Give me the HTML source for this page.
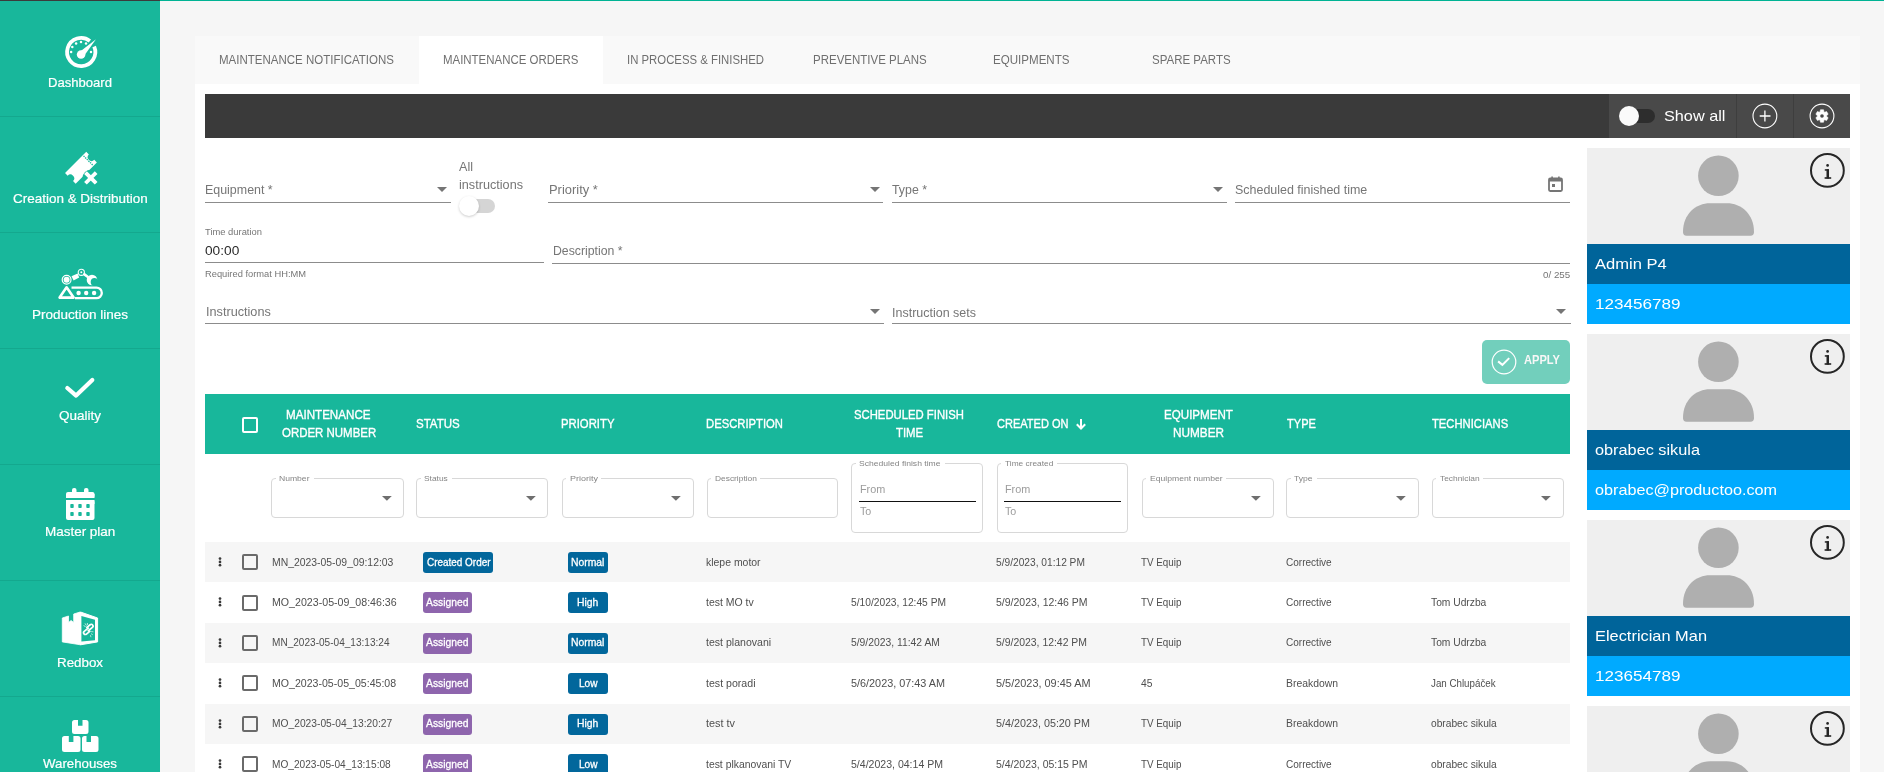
<!DOCTYPE html>
<html><head><meta charset="utf-8"><title>Maintenance Orders</title>
<style>
html,body{margin:0;padding:0;}
body{width:1884px;height:772px;position:relative;overflow:hidden;background:#f6f6f6;font-family:"Liberation Sans",sans-serif;}
.t{position:absolute;white-space:nowrap;transform-origin:0 0;}
.r{position:absolute;}
.s{position:absolute;overflow:visible;}
</style></head><body>
<div class="r" style="left:0px;top:0px;width:160px;height:1px;background:#3b3b3b;"></div>
<div class="r" style="left:160px;top:0px;width:1724px;height:1px;background:#00b394;"></div>
<div class="r" style="left:0px;top:1px;width:160px;height:771px;background:#18b79b;"></div>
<div class="r" style="left:0px;top:116px;width:160px;height:1px;background:#14a88e;"></div>
<div class="r" style="left:0px;top:232px;width:160px;height:1px;background:#14a88e;"></div>
<div class="r" style="left:0px;top:348px;width:160px;height:1px;background:#14a88e;"></div>
<div class="r" style="left:0px;top:464px;width:160px;height:1px;background:#14a88e;"></div>
<div class="r" style="left:0px;top:580px;width:160px;height:1px;background:#14a88e;"></div>
<div class="r" style="left:0px;top:696px;width:160px;height:1px;background:#14a88e;"></div>
<div class="t" style="left:48.00px;top:76.00px;font-size:13px;line-height:13px;color:#ffffff;transform:scaleX(1.0063);-webkit-text-stroke:0.2px #fff;">Dashboard</div>
<div class="t" style="left:12.65px;top:192.00px;font-size:13px;line-height:13px;color:#ffffff;transform:scaleX(1.0357);-webkit-text-stroke:0.2px #fff;">Creation &amp; Distribution</div>
<div class="t" style="left:32.00px;top:308.00px;font-size:13px;line-height:13px;color:#ffffff;transform:scaleX(1.0378);-webkit-text-stroke:0.2px #fff;">Production lines</div>
<div class="t" style="left:59.00px;top:409.00px;font-size:13px;line-height:13px;color:#ffffff;transform:scaleX(1.0381);-webkit-text-stroke:0.2px #fff;">Quality</div>
<div class="t" style="left:44.85px;top:525.00px;font-size:13px;line-height:13px;color:#ffffff;transform:scaleX(1.0350);-webkit-text-stroke:0.2px #fff;">Master plan</div>
<div class="t" style="left:57.00px;top:656.00px;font-size:13px;line-height:13px;color:#ffffff;transform:scaleX(1.0266);-webkit-text-stroke:0.2px #fff;">Redbox</div>
<div class="t" style="left:43.00px;top:757.00px;font-size:13px;line-height:13px;color:#ffffff;transform:scaleX(1.0207);-webkit-text-stroke:0.2px #fff;">Warehouses</div>
<svg class="s" style="left:65px;top:36px;" width="32" height="32" viewBox="0 0 32 32"><path d="M29.18 10.49 A14.1 14.1 0 1 1 24.88 4.89" fill="none" stroke="#fff" stroke-width="3.8"/>
<circle cx="16.1" cy="18.5" r="4.3" fill="#fff"/>
<path d="M31 3.2 L18.6 20.6 L13.9 16.4 Z" fill="#fff"/>
<circle cx="6.1" cy="16" r="1.25" fill="#fff"/><circle cx="7.3" cy="11" r="1.25" fill="#fff"/>
<circle cx="11.1" cy="7.4" r="1.25" fill="#fff"/><circle cx="16" cy="6" r="1.25" fill="#fff"/>
<circle cx="21" cy="7.4" r="1.25" fill="#fff"/><circle cx="26" cy="16" r="1.25" fill="#fff"/></svg>
<svg class="s" style="left:60px;top:146px;" width="44" height="44" viewBox="0 0 44 44"><g transform="translate(20.95 21.75) rotate(-45)">
<path d="M-15 -7.5 H15 V-3.8 A3.8 3.8 0 0 0 15 3.8 V7.5 H-15 V3.8 A3.8 3.8 0 0 0 -15 -3.8 Z" fill="#fff"/>
<g fill="#18b79b"><rect x="9.6" y="-6.6" width="1.3" height="1.4"/><rect x="9.6" y="-4.3" width="1.3" height="1.4"/><rect x="9.6" y="-2" width="1.3" height="1.4"/><rect x="9.6" y="0.3" width="1.3" height="1.4"/><rect x="9.6" y="2.6" width="1.3" height="1.4"/><rect x="9.6" y="4.9" width="1.3" height="1.4"/></g>
</g>
<circle cx="30.8" cy="31.9" r="8.2" fill="#18b79b"/>
<path d="M26.8 27.9 L34.8 35.9 M34.8 27.9 L26.8 35.9" stroke="#fff" stroke-width="3.8" stroke-linecap="square" stroke-linejoin="round"/></svg>
<svg class="s" style="left:56px;top:262px;" width="48" height="42" viewBox="0 0 48 42"><g fill="none" stroke="#fff">
<path d="M10.6 25.3 L3.6 35.6 L17.6 35.6 Z" stroke-width="2.6" stroke-linejoin="round"/>
<path d="M15.5 25.6 H40.5 A5.3 5.3 0 0 1 40.5 36.2 H19" stroke-width="2.3"/>
<circle cx="10.6" cy="17.7" r="4.4" stroke-width="1.2"/>
<circle cx="25.3" cy="10.3" r="3.1" stroke-width="1.1"/>
</g>
<mask id="clawm"><rect x="0" y="0" width="48" height="42" fill="#fff"/><circle cx="38.6" cy="20" r="3.9" fill="#000"/></mask>
<circle cx="36" cy="18" r="5.3" fill="#fff" mask="url(#clawm)"/>
<circle cx="10.6" cy="17.7" r="3" fill="#fff"/>
<circle cx="25.3" cy="10.3" r="1" fill="#fff"/>
<path d="M15.5 14.2 L21.6 11.6 L23.2 15.4 L17.6 18.4 Z" fill="#fff"/>
<path d="M28.4 12.4 L31.6 14.8" stroke="#fff" stroke-width="2.6" stroke-linecap="round"/>
<circle cx="22.6" cy="31" r="2.2" fill="#fff"/><circle cx="30.2" cy="31" r="2.2" fill="#fff"/><circle cx="38.1" cy="31" r="2.2" fill="#fff"/></svg>
<svg class="s" style="left:62px;top:374px;" width="36" height="28" viewBox="0 0 36 28"><path d="M5.3 14 L14.1 21.6 L30.3 6" fill="none" stroke="#fff" stroke-width="4.2" stroke-linecap="round" stroke-linejoin="round"/></svg>
<svg class="s" style="left:58px;top:480px;" width="44" height="44" viewBox="0 0 44 44"><rect x="8" y="12" width="28.5" height="6" rx="2" fill="#fff"/>
<rect x="8" y="14" width="28.5" height="4" fill="#fff"/>
<rect x="8" y="20" width="28.5" height="20" rx="2" fill="#fff"/>
<rect x="8" y="20" width="28.5" height="4" fill="#fff"/>
<rect x="14" y="8" width="4.5" height="6" rx="2" fill="#fff"/><rect x="26" y="8" width="4.5" height="6" rx="2" fill="#fff"/>
<g fill="#18b79b"><rect x="12.3" y="24" width="3.4" height="4" rx="0.8"/><rect x="20.3" y="24" width="3.4" height="4" rx="0.8"/><rect x="28.3" y="24" width="3.4" height="4" rx="0.8"/>
<rect x="12.3" y="32" width="3.4" height="4" rx="0.8"/><rect x="20.3" y="32" width="3.4" height="4" rx="0.8"/><rect x="28.3" y="32" width="3.4" height="4" rx="0.8"/></g></svg>
<svg class="s" style="left:58px;top:606px;" width="44" height="44" viewBox="0 0 44 44"><path d="M4.3 12 L10.5 10 V16.5 L13.1 14.5 L15.7 16.5 V8 L22.2 6 L22.5 38.8 L4.3 35.9 Z" fill="#fff" stroke="#fff" stroke-width="0.8" stroke-linejoin="round"/>
<path d="M22.5 6 L39.6 12 V35.9 L22.5 38.8 Z" fill="#fff" stroke="#fff" stroke-width="1" stroke-linejoin="round"/>
<path d="M23.4 10 L37 13.7 V34.2 L23.4 35.6 Z" fill="#18b79b"/>
<g transform="translate(30.3 23.4) rotate(-40)" fill="none" stroke="#fff" stroke-width="1.7"><path d="M1.6 -1.1 H-4.4 A1.75 1.75 0 0 0 -4.4 2.4 H0.6"/><path d="M-1.6 1.1 H4.4 A1.75 1.75 0 0 0 4.4 -2.4 H-0.6"/></g>
<path d="M25.6 19.6 L27.6 20.6 M27 17.4 L28.4 19.6 M29.4 17 L29.4 19" stroke="#fff" stroke-width="0.9" opacity="0.8"/>
<path d="M33.2 25.6 L35.4 25.8 M33 27.6 L34.8 28.8 M32.4 29.2 L33 31.2" stroke="#fff" stroke-width="0.9" opacity="0.7"/></svg>
<svg class="s" style="left:58px;top:714px;" width="44" height="44" viewBox="0 0 44 44"><path d="M16.5 6 H20 V11.7 H24.5 V6 H28 A2.5 2.5 0 0 1 30.5 8.5 V17.5 A2.5 2.5 0 0 1 28 20 H16.5 A2.5 2.5 0 0 1 14 17.5 V8.5 A2.5 2.5 0 0 1 16.5 6 Z" fill="#fff"/>
<path d="M6.5 22 H10.8 V28 H15.4 V22 H20 A2.5 2.5 0 0 1 22.5 24.5 V35.4 A2.5 2.5 0 0 1 20 37.9 H6.5 A2.5 2.5 0 0 1 4 35.4 V24.5 A2.5 2.5 0 0 1 6.5 22 Z" fill="#fff"/>
<path d="M26.5 22 H28.5 V28 H33 V22 H38 A2.5 2.5 0 0 1 40.5 24.5 V35.4 A2.5 2.5 0 0 1 38 37.9 H26.5 A2.5 2.5 0 0 1 24 35.4 V24.5 A2.5 2.5 0 0 1 26.5 22 Z" fill="#fff"/></svg>
<div class="r" style="left:195px;top:36px;width:1665px;height:48px;background:#f9f9f9;"></div>
<div class="r" style="left:419px;top:36px;width:184px;height:48px;background:#ffffff;"></div>
<div class="r" style="left:195px;top:84px;width:1665px;height:688px;background:#ffffff;"></div>
<div class="t" style="left:219.40px;top:53.59px;font-size:12.3px;line-height:12.3px;color:#6f6f6f;transform:scaleX(0.9358);">MAINTENANCE NOTIFICATIONS</div>
<div class="t" style="left:443.00px;top:53.59px;font-size:12.3px;line-height:12.3px;color:#6f6f6f;transform:scaleX(0.9308);">MAINTENANCE ORDERS</div>
<div class="t" style="left:627.20px;top:53.59px;font-size:12.3px;line-height:12.3px;color:#6f6f6f;transform:scaleX(0.9237);">IN PROCESS &amp; FINISHED</div>
<div class="t" style="left:812.90px;top:53.59px;font-size:12.3px;line-height:12.3px;color:#6f6f6f;transform:scaleX(0.9344);">PREVENTIVE PLANS</div>
<div class="t" style="left:992.70px;top:53.59px;font-size:12.3px;line-height:12.3px;color:#6f6f6f;transform:scaleX(0.9406);">EQUIPMENTS</div>
<div class="t" style="left:1151.60px;top:53.59px;font-size:12.3px;line-height:12.3px;color:#6f6f6f;transform:scaleX(0.9360);">SPARE PARTS</div>
<div class="r" style="left:205px;top:94px;width:1645px;height:44px;background:#3a3a3a;"></div>
<div class="r" style="left:1609px;top:94px;width:241px;height:44px;background:#494949;"></div>
<div class="r" style="left:1736px;top:94px;width:1px;height:44px;background:#3e3e3e;"></div>
<div class="r" style="left:1793px;top:94px;width:1px;height:44px;background:#3e3e3e;"></div>
<div class="r" style="left:1624px;top:109px;width:31px;height:14px;background:#2d2d2d;border-radius:7px;"></div>
<div class="r" style="left:1618.8px;top:106px;width:20px;height:20px;background:#fafafa;border-radius:50%;"></div>
<div class="t" style="left:1663.80px;top:108.10px;font-size:15px;line-height:15px;color:#ffffff;transform:scaleX(1.0829);">Show all</div>
<svg class="s" style="left:1752px;top:103px;" width="26" height="26" viewBox="0 0 26 26"><circle cx="12.9" cy="13" r="11.9" fill="none" stroke="#fff" stroke-width="1.1"/><path d="M7.7 13 H18.5 M12.9 7.6 V18.4" stroke="#fff" stroke-width="1.3"/></svg>
<svg class="s" style="left:1809px;top:103px;" width="26" height="26" viewBox="0 0 26 26"><circle cx="13" cy="13" r="11.9" fill="none" stroke="#fff" stroke-width="1.1"/>
<g transform="translate(13 13)"><path d="M-1.91 -4.29 L-1.55 -6.21 L1.55 -6.21 L1.91 -4.29 L2.76 -3.80 L4.60 -4.45 L6.15 -1.76 L4.67 -0.49 L4.67 0.49 L6.15 1.76 L4.60 4.45 L2.76 3.80 L1.91 4.29 L1.55 6.21 L-1.55 6.21 L-1.91 4.29 L-2.76 3.80 L-4.60 4.45 L-6.15 1.76 L-4.67 0.49 L-4.67 -0.49 L-6.15 -1.76 L-4.60 -4.45 L-2.76 -3.80 Z" fill="#fff" stroke="#fff" stroke-width="0.6" stroke-linejoin="round"/><circle r="1.8" fill="#494949"/></g></svg>
<div class="t" style="left:205.30px;top:183.30px;font-size:13px;line-height:13px;color:#767676;transform:scaleX(0.9559);">Equipment *</div>
<div class="t" style="left:459.00px;top:161.22px;font-size:12.5px;line-height:12.5px;color:#767676;transform:scaleX(1.0077);">All</div>
<div class="t" style="left:459.00px;top:178.62px;font-size:12.5px;line-height:12.5px;color:#767676;transform:scaleX(1.0123);">instructions</div>
<div class="t" style="left:548.50px;top:183.30px;font-size:13px;line-height:13px;color:#767676;transform:scaleX(0.9935);">Priority *</div>
<div class="t" style="left:892.40px;top:183.30px;font-size:13px;line-height:13px;color:#767676;transform:scaleX(0.9497);">Type *</div>
<div class="t" style="left:1235.00px;top:183.30px;font-size:13px;line-height:13px;color:#767676;transform:scaleX(0.9585);">Scheduled finished time</div>
<div class="r" style="left:205px;top:202px;width:246px;height:1px;background:#8c8c8c;"></div>
<div class="r" style="left:548px;top:202px;width:335px;height:1px;background:#8c8c8c;"></div>
<div class="r" style="left:892px;top:202px;width:335px;height:1px;background:#8c8c8c;"></div>
<div class="r" style="left:1235px;top:202px;width:335px;height:1px;background:#8c8c8c;"></div>
<div class="r" style="left:205px;top:262px;width:339px;height:1px;background:#8c8c8c;"></div>
<div class="r" style="left:552px;top:263px;width:1018px;height:1px;background:#8c8c8c;"></div>
<div class="r" style="left:205px;top:323px;width:679px;height:1px;background:#8c8c8c;"></div>
<div class="r" style="left:892px;top:323px;width:679px;height:1px;background:#8c8c8c;"></div>
<svg class="s" style="left:437px;top:187px;" width="10" height="5" viewBox="0 0 10 5"><path d="M0 0 H10 L5.0 5 Z" fill="#757575"/></svg>
<svg class="s" style="left:870px;top:187px;" width="10" height="5" viewBox="0 0 10 5"><path d="M0 0 H10 L5.0 5 Z" fill="#757575"/></svg>
<svg class="s" style="left:1213.4px;top:187px;" width="10" height="5" viewBox="0 0 10 5"><path d="M0 0 H10 L5.0 5 Z" fill="#757575"/></svg>
<svg class="s" style="left:870px;top:309px;" width="10" height="5" viewBox="0 0 10 5"><path d="M0 0 H10 L5.0 5 Z" fill="#757575"/></svg>
<svg class="s" style="left:1556px;top:309px;" width="10" height="5" viewBox="0 0 10 5"><path d="M0 0 H10 L5.0 5 Z" fill="#757575"/></svg>
<svg class="s" style="left:1548px;top:176px;" width="15" height="16" viewBox="0 0 15 16"><rect x="1" y="2.5" width="13" height="12.5" rx="1.2" fill="none" stroke="#757575" stroke-width="1.8"/><rect x="1" y="2.5" width="13" height="3" fill="#757575"/><rect x="3.3" y="0.5" width="1.6" height="3" fill="#757575"/><rect x="10.1" y="0.5" width="1.6" height="3" fill="#757575"/><rect x="4" y="8" width="3" height="3" fill="#757575"/></svg>
<div class="r" style="left:460px;top:199px;width:35px;height:14px;background:#d5d5d5;border-radius:7px;"></div>
<div class="r" style="left:458.5px;top:196px;width:20px;height:20px;background:#ffffff;border-radius:50%;box-shadow:0 1px 2.5px rgba(0,0,0,0.2);"></div>
<div class="t" style="left:205.00px;top:228.18px;font-size:9px;line-height:9px;color:#767676;transform:scaleX(1.0422);">Time duration</div>
<div class="t" style="left:205.00px;top:244.30px;font-size:13px;line-height:13px;color:#2a2a2a;transform:scaleX(1.0543);">00:00</div>
<div class="t" style="left:205.00px;top:269.16px;font-size:9.5px;line-height:9.5px;color:#767676;transform:scaleX(0.9811);">Required format HH:MM</div>
<div class="t" style="left:552.70px;top:244.00px;font-size:13px;line-height:13px;color:#767676;transform:scaleX(0.9444);">Description *</div>
<div class="t" style="left:1542.80px;top:269.86px;font-size:9.5px;line-height:9.5px;color:#767676;transform:scaleX(1.0298);">0/ 255</div>
<div class="t" style="left:205.50px;top:305.00px;font-size:13px;line-height:13px;color:#767676;transform:scaleX(0.9748);">Instructions</div>
<div class="t" style="left:892.20px;top:305.50px;font-size:13px;line-height:13px;color:#767676;transform:scaleX(0.9608);">Instruction sets</div>
<div class="r" style="left:1482px;top:340px;width:88px;height:44px;background:#72cfbc;border-radius:5px;"></div>
<svg class="s" style="left:1491px;top:349px;" width="26" height="26" viewBox="0 0 26 26"><circle cx="13" cy="13" r="11.8" fill="none" stroke="#fff" stroke-width="1.2"/><path d="M7.1 12.4 L11.4 15.9 L18.2 9.1" fill="none" stroke="#fff" stroke-width="2"/></svg>
<div class="t" style="left:1524.10px;top:354.32px;font-size:12.5px;line-height:12.5px;color:#f7f7f7;font-weight:bold;transform:scaleX(0.8882);">APPLY</div>
<div class="r" style="left:205px;top:394px;width:1365px;height:60px;background:#18b79b;"></div>
<div class="r" style="left:242px;top:417px;width:16px;height:16px;background:transparent;border:2px solid #fff;border-radius:2px;box-sizing:border-box;"></div>
<div class="t" style="left:286.40px;top:408.60px;font-size:12.4px;line-height:12.4px;color:#ffffff;transform:scaleX(0.9373);-webkit-text-stroke:0.35px #fff;">MAINTENANCE</div>
<div class="t" style="left:281.50px;top:426.50px;font-size:12.4px;line-height:12.4px;color:#ffffff;transform:scaleX(0.9248);-webkit-text-stroke:0.35px #fff;">ORDER NUMBER</div>
<div class="t" style="left:416.30px;top:417.50px;font-size:12.4px;line-height:12.4px;color:#ffffff;transform:scaleX(0.9304);-webkit-text-stroke:0.35px #fff;">STATUS</div>
<div class="t" style="left:561.40px;top:417.50px;font-size:12.4px;line-height:12.4px;color:#ffffff;transform:scaleX(0.9136);-webkit-text-stroke:0.35px #fff;">PRIORITY</div>
<div class="t" style="left:706.20px;top:417.50px;font-size:12.4px;line-height:12.4px;color:#ffffff;transform:scaleX(0.9086);-webkit-text-stroke:0.35px #fff;">DESCRIPTION</div>
<div class="t" style="left:853.80px;top:408.50px;font-size:12.4px;line-height:12.4px;color:#ffffff;transform:scaleX(0.9123);-webkit-text-stroke:0.35px #fff;">SCHEDULED FINISH</div>
<div class="t" style="left:895.60px;top:426.50px;font-size:12.4px;line-height:12.4px;color:#ffffff;transform:scaleX(0.9183);-webkit-text-stroke:0.35px #fff;">TIME</div>
<div class="t" style="left:996.70px;top:417.50px;font-size:12.4px;line-height:12.4px;color:#ffffff;transform:scaleX(0.8895);-webkit-text-stroke:0.35px #fff;">CREATED ON</div>
<svg class="s" style="left:1075px;top:418px;" width="12" height="12" viewBox="0 0 12 12"><path d="M6 1 V10.5 M1.8 6.3 L6 10.5 L10.2 6.3" fill="none" stroke="#fff" stroke-width="2"/></svg>
<div class="t" style="left:1164.40px;top:408.50px;font-size:12.4px;line-height:12.4px;color:#ffffff;transform:scaleX(0.9360);-webkit-text-stroke:0.35px #fff;">EQUIPMENT</div>
<div class="t" style="left:1173.30px;top:426.50px;font-size:12.4px;line-height:12.4px;color:#ffffff;transform:scaleX(0.9491);-webkit-text-stroke:0.35px #fff;">NUMBER</div>
<div class="t" style="left:1286.60px;top:417.50px;font-size:12.4px;line-height:12.4px;color:#ffffff;transform:scaleX(0.8923);-webkit-text-stroke:0.35px #fff;">TYPE</div>
<div class="t" style="left:1432.20px;top:417.50px;font-size:12.4px;line-height:12.4px;color:#ffffff;transform:scaleX(0.9066);-webkit-text-stroke:0.35px #fff;">TECHNICIANS</div>
<div class="r" style="left:271px;top:478.4px;width:133px;height:39.60000000000002px;background:transparent;border:1.3px solid #d8d8d8;border-radius:4px;box-sizing:border-box;"></div>
<div class="r" style="left:275.5px;top:476.4px;width:38.0px;height:4px;background:#ffffff;"></div>
<div class="t" style="left:279.00px;top:474.83px;font-size:8px;line-height:8px;color:#858585;transform:scaleX(1.0719);">Number</div>
<svg class="s" style="left:381.8px;top:495.59999999999997px;" width="9.8" height="4.8" viewBox="0 0 9.8 4.8"><path d="M0 0 H9.8 L4.9 4.8 Z" fill="#6f6f6f"/></svg>
<div class="r" style="left:416.3px;top:478.4px;width:132.2px;height:39.60000000000002px;background:transparent;border:1.3px solid #d8d8d8;border-radius:4px;box-sizing:border-box;"></div>
<div class="r" style="left:420.8px;top:476.4px;width:31.3px;height:4px;background:#ffffff;"></div>
<div class="t" style="left:424.30px;top:474.83px;font-size:8px;line-height:8px;color:#858585;transform:scaleX(1.0494);">Status</div>
<svg class="s" style="left:526.3px;top:495.59999999999997px;" width="9.8" height="4.8" viewBox="0 0 9.8 4.8"><path d="M0 0 H9.8 L4.9 4.8 Z" fill="#6f6f6f"/></svg>
<div class="r" style="left:561.5px;top:478.4px;width:132.10000000000002px;height:39.60000000000002px;background:transparent;border:1.3px solid #d8d8d8;border-radius:4px;box-sizing:border-box;"></div>
<div class="r" style="left:566.0px;top:476.4px;width:35.4px;height:4px;background:#ffffff;"></div>
<div class="t" style="left:569.50px;top:474.83px;font-size:8px;line-height:8px;color:#858585;transform:scaleX(1.1208);">Priority</div>
<svg class="s" style="left:671.4px;top:495.59999999999997px;" width="9.8" height="4.8" viewBox="0 0 9.8 4.8"><path d="M0 0 H9.8 L4.9 4.8 Z" fill="#6f6f6f"/></svg>
<div class="r" style="left:706.5px;top:478.4px;width:131.5px;height:39.60000000000002px;background:transparent;border:1.3px solid #d8d8d8;border-radius:4px;box-sizing:border-box;"></div>
<div class="r" style="left:711.0px;top:476.4px;width:49.4px;height:4px;background:#ffffff;"></div>
<div class="t" style="left:714.50px;top:474.83px;font-size:8px;line-height:8px;color:#858585;transform:scaleX(1.0471);">Description</div>
<div class="r" style="left:1141.5px;top:478.4px;width:132.0999999999999px;height:39.60000000000002px;background:transparent;border:1.3px solid #d8d8d8;border-radius:4px;box-sizing:border-box;"></div>
<div class="r" style="left:1146.0px;top:476.4px;width:80.1px;height:4px;background:#ffffff;"></div>
<div class="t" style="left:1149.50px;top:474.83px;font-size:8px;line-height:8px;color:#858585;transform:scaleX(1.0740);">Equipment number</div>
<svg class="s" style="left:1251.3999999999999px;top:495.59999999999997px;" width="9.8" height="4.8" viewBox="0 0 9.8 4.8"><path d="M0 0 H9.8 L4.9 4.8 Z" fill="#6f6f6f"/></svg>
<div class="r" style="left:1286.2px;top:478.4px;width:132.39999999999986px;height:39.60000000000002px;background:transparent;border:1.3px solid #d8d8d8;border-radius:4px;box-sizing:border-box;"></div>
<div class="r" style="left:1290.7px;top:476.4px;width:26.1px;height:4px;background:#ffffff;"></div>
<div class="t" style="left:1294.20px;top:474.83px;font-size:8px;line-height:8px;color:#858585;transform:scaleX(1.0724);">Type</div>
<svg class="s" style="left:1396.3999999999999px;top:495.59999999999997px;" width="9.8" height="4.8" viewBox="0 0 9.8 4.8"><path d="M0 0 H9.8 L4.9 4.8 Z" fill="#6f6f6f"/></svg>
<div class="r" style="left:1431.5px;top:478.4px;width:132.0999999999999px;height:39.60000000000002px;background:transparent;border:1.3px solid #d8d8d8;border-radius:4px;box-sizing:border-box;"></div>
<div class="r" style="left:1436.0px;top:476.4px;width:47.1px;height:4px;background:#ffffff;"></div>
<div class="t" style="left:1439.50px;top:474.83px;font-size:8px;line-height:8px;color:#858585;transform:scaleX(1.0476);">Technician</div>
<svg class="s" style="left:1541.3999999999999px;top:495.59999999999997px;" width="9.8" height="4.8" viewBox="0 0 9.8 4.8"><path d="M0 0 H9.8 L4.9 4.8 Z" fill="#6f6f6f"/></svg>
<div class="r" style="left:851.4px;top:463.3px;width:132.10000000000002px;height:69.30000000000001px;background:transparent;border:1.3px solid #d8d8d8;border-radius:4px;box-sizing:border-box;"></div>
<div class="r" style="left:855.9px;top:461.3px;width:89.0px;height:4px;background:#ffffff;"></div>
<div class="t" style="left:859.40px;top:459.73px;font-size:8px;line-height:8px;color:#858585;transform:scaleX(1.0717);">Scheduled finish time</div>
<div class="t" style="left:859.90px;top:483.69px;font-size:11px;line-height:11px;color:#9c9c9c;transform:scaleX(0.9858);">From</div>
<div class="r" style="left:858.8px;top:501px;width:117.2px;height:1.4px;background:#111111;"></div>
<div class="t" style="left:859.90px;top:505.69px;font-size:11px;line-height:11px;color:#9c9c9c;transform:scaleX(0.9726);">To</div>
<div class="r" style="left:996.5px;top:463.3px;width:131.9000000000001px;height:69.30000000000001px;background:transparent;border:1.3px solid #d8d8d8;border-radius:4px;box-sizing:border-box;"></div>
<div class="r" style="left:1001.0px;top:461.3px;width:55.8px;height:4px;background:#ffffff;"></div>
<div class="t" style="left:1004.50px;top:459.73px;font-size:8px;line-height:8px;color:#858585;transform:scaleX(1.0412);">Time created</div>
<div class="t" style="left:1005.00px;top:483.69px;font-size:11px;line-height:11px;color:#9c9c9c;transform:scaleX(0.9858);">From</div>
<div class="r" style="left:1003.9px;top:501px;width:117.2px;height:1.4px;background:#111111;"></div>
<div class="t" style="left:1005.00px;top:505.69px;font-size:11px;line-height:11px;color:#9c9c9c;transform:scaleX(0.9726);">To</div>
<div class="r" style="left:205px;top:542.0px;width:1365px;height:40.4px;background:#f6f6f6;"></div>
<svg class="s" style="left:217px;top:556px;" width="6" height="12" viewBox="0 0 6 12"><circle cx="3" cy="2.6" r="1.35" fill="#3a3a3a"/><circle cx="3" cy="5.9" r="1.35" fill="#3a3a3a"/><circle cx="3" cy="9.2" r="1.35" fill="#3a3a3a"/></svg>
<div class="r" style="left:242px;top:554.2px;width:16px;height:16px;background:transparent;border:2px solid #6a6a6a;border-radius:2px;box-sizing:border-box;"></div>
<div class="t" style="left:271.50px;top:556.69px;font-size:11px;line-height:11px;color:#4f4f4f;transform:scaleX(0.9452);">MN_2023-05-09_09:12:03</div>
<div class="r" style="left:423.2px;top:552.0px;width:69.8px;height:21px;background:#02679c;border-radius:3px;"></div>
<div class="t" style="left:426.50px;top:556.69px;font-size:11px;line-height:11px;color:#fff;transform:scaleX(0.9031);-webkit-text-stroke:0.3px #fff;">Created Order</div>
<div class="r" style="left:568px;top:552.0px;width:40.1px;height:21px;background:#02679c;border-radius:3px;"></div>
<div class="t" style="left:571.35px;top:556.69px;font-size:11px;line-height:11px;color:#fff;transform:scaleX(0.9421);-webkit-text-stroke:0.3px #fff;">Normal</div>
<div class="t" style="left:706.00px;top:556.69px;font-size:11px;line-height:11px;color:#4f4f4f;transform:scaleX(0.9500);">klepe motor</div>
<div class="t" style="left:996.00px;top:556.69px;font-size:11px;line-height:11px;color:#4f4f4f;transform:scaleX(0.9259);">5/9/2023, 01:12 PM</div>
<div class="t" style="left:1141.00px;top:556.69px;font-size:11px;line-height:11px;color:#4f4f4f;transform:scaleX(0.8929);">TV Equip</div>
<div class="t" style="left:1286.00px;top:556.69px;font-size:11px;line-height:11px;color:#4f4f4f;transform:scaleX(0.9117);">Corrective</div>
<svg class="s" style="left:217px;top:596px;" width="6" height="12" viewBox="0 0 6 12"><circle cx="3" cy="2.6" r="1.35" fill="#3a3a3a"/><circle cx="3" cy="5.9" r="1.35" fill="#3a3a3a"/><circle cx="3" cy="9.2" r="1.35" fill="#3a3a3a"/></svg>
<div class="r" style="left:242px;top:594.6px;width:16px;height:16px;background:transparent;border:2px solid #6a6a6a;border-radius:2px;box-sizing:border-box;"></div>
<div class="t" style="left:271.50px;top:597.09px;font-size:11px;line-height:11px;color:#4f4f4f;transform:scaleX(0.9663);">MO_2023-05-09_08:46:36</div>
<div class="r" style="left:423.2px;top:592.4px;width:48.7px;height:21px;background:#8e65ad;border-radius:3px;"></div>
<div class="t" style="left:426.30px;top:597.09px;font-size:11px;line-height:11px;color:#fff;transform:scaleX(0.9392);-webkit-text-stroke:0.3px #fff;">Assigned</div>
<div class="r" style="left:568px;top:592.4px;width:40.1px;height:21px;background:#02679c;border-radius:3px;"></div>
<div class="t" style="left:577.40px;top:597.09px;font-size:11px;line-height:11px;color:#fff;transform:scaleX(0.9415);-webkit-text-stroke:0.3px #fff;">High</div>
<div class="t" style="left:706.00px;top:597.09px;font-size:11px;line-height:11px;color:#4f4f4f;transform:scaleX(0.9518);">test MO tv</div>
<div class="t" style="left:851.00px;top:597.09px;font-size:11px;line-height:11px;color:#4f4f4f;transform:scaleX(0.9302);">5/10/2023, 12:45 PM</div>
<div class="t" style="left:996.00px;top:597.09px;font-size:11px;line-height:11px;color:#4f4f4f;transform:scaleX(0.9540);">5/9/2023, 12:46 PM</div>
<div class="t" style="left:1141.00px;top:597.09px;font-size:11px;line-height:11px;color:#4f4f4f;transform:scaleX(0.8929);">TV Equip</div>
<div class="t" style="left:1286.00px;top:597.09px;font-size:11px;line-height:11px;color:#4f4f4f;transform:scaleX(0.9117);">Corrective</div>
<div class="t" style="left:1431.00px;top:597.09px;font-size:11px;line-height:11px;color:#4f4f4f;transform:scaleX(0.9326);">Tom Udrzba</div>
<div class="r" style="left:205px;top:622.8px;width:1365px;height:40.4px;background:#f6f6f6;"></div>
<svg class="s" style="left:217px;top:637px;" width="6" height="12" viewBox="0 0 6 12"><circle cx="3" cy="2.6" r="1.35" fill="#3a3a3a"/><circle cx="3" cy="5.9" r="1.35" fill="#3a3a3a"/><circle cx="3" cy="9.2" r="1.35" fill="#3a3a3a"/></svg>
<div class="r" style="left:242px;top:635.0px;width:16px;height:16px;background:transparent;border:2px solid #6a6a6a;border-radius:2px;box-sizing:border-box;"></div>
<div class="t" style="left:271.50px;top:637.49px;font-size:11px;line-height:11px;color:#4f4f4f;transform:scaleX(0.9149);">MN_2023-05-04_13:13:24</div>
<div class="r" style="left:423.2px;top:632.8px;width:48.7px;height:21px;background:#8e65ad;border-radius:3px;"></div>
<div class="t" style="left:426.30px;top:637.49px;font-size:11px;line-height:11px;color:#fff;transform:scaleX(0.9392);-webkit-text-stroke:0.3px #fff;">Assigned</div>
<div class="r" style="left:568px;top:632.8px;width:40.1px;height:21px;background:#02679c;border-radius:3px;"></div>
<div class="t" style="left:571.35px;top:637.49px;font-size:11px;line-height:11px;color:#fff;transform:scaleX(0.9421);-webkit-text-stroke:0.3px #fff;">Normal</div>
<div class="t" style="left:706.00px;top:637.49px;font-size:11px;line-height:11px;color:#4f4f4f;transform:scaleX(0.9590);">test planovani</div>
<div class="t" style="left:851.00px;top:637.49px;font-size:11px;line-height:11px;color:#4f4f4f;transform:scaleX(0.9398);">5/9/2023, 11:42 AM</div>
<div class="t" style="left:996.00px;top:637.49px;font-size:11px;line-height:11px;color:#4f4f4f;transform:scaleX(0.9478);">5/9/2023, 12:42 PM</div>
<div class="t" style="left:1141.00px;top:637.49px;font-size:11px;line-height:11px;color:#4f4f4f;transform:scaleX(0.8929);">TV Equip</div>
<div class="t" style="left:1286.00px;top:637.49px;font-size:11px;line-height:11px;color:#4f4f4f;transform:scaleX(0.9117);">Corrective</div>
<div class="t" style="left:1431.00px;top:637.49px;font-size:11px;line-height:11px;color:#4f4f4f;transform:scaleX(0.9326);">Tom Udrzba</div>
<svg class="s" style="left:217px;top:677px;" width="6" height="12" viewBox="0 0 6 12"><circle cx="3" cy="2.6" r="1.35" fill="#3a3a3a"/><circle cx="3" cy="5.9" r="1.35" fill="#3a3a3a"/><circle cx="3" cy="9.2" r="1.35" fill="#3a3a3a"/></svg>
<div class="r" style="left:242px;top:675.4px;width:16px;height:16px;background:transparent;border:2px solid #6a6a6a;border-radius:2px;box-sizing:border-box;"></div>
<div class="t" style="left:271.50px;top:677.89px;font-size:11px;line-height:11px;color:#4f4f4f;transform:scaleX(0.9617);">MO_2023-05-05_05:45:08</div>
<div class="r" style="left:423.2px;top:673.2px;width:48.7px;height:21px;background:#8e65ad;border-radius:3px;"></div>
<div class="t" style="left:426.30px;top:677.89px;font-size:11px;line-height:11px;color:#fff;transform:scaleX(0.9392);-webkit-text-stroke:0.3px #fff;">Assigned</div>
<div class="r" style="left:568px;top:673.2px;width:40.1px;height:21px;background:#02679c;border-radius:3px;"></div>
<div class="t" style="left:578.80px;top:677.89px;font-size:11px;line-height:11px;color:#fff;transform:scaleX(0.9168);-webkit-text-stroke:0.3px #fff;">Low</div>
<div class="t" style="left:706.00px;top:677.89px;font-size:11px;line-height:11px;color:#4f4f4f;transform:scaleX(0.9637);">test poradi</div>
<div class="t" style="left:851.00px;top:677.89px;font-size:11px;line-height:11px;color:#4f4f4f;transform:scaleX(0.9852);">5/6/2023, 07:43 AM</div>
<div class="t" style="left:996.00px;top:677.89px;font-size:11px;line-height:11px;color:#4f4f4f;transform:scaleX(0.9915);">5/5/2023, 09:45 AM</div>
<div class="t" style="left:1141.00px;top:677.89px;font-size:11px;line-height:11px;color:#4f4f4f;transform:scaleX(0.9399);">45</div>
<div class="t" style="left:1286.00px;top:677.89px;font-size:11px;line-height:11px;color:#4f4f4f;transform:scaleX(0.9449);">Breakdown</div>
<div class="t" style="left:1431.00px;top:677.89px;font-size:11px;line-height:11px;color:#4f4f4f;transform:scaleX(0.8877);">Jan Chlupáček</div>
<div class="r" style="left:205px;top:703.6px;width:1365px;height:40.4px;background:#f6f6f6;"></div>
<svg class="s" style="left:217px;top:718px;" width="6" height="12" viewBox="0 0 6 12"><circle cx="3" cy="2.6" r="1.35" fill="#3a3a3a"/><circle cx="3" cy="5.9" r="1.35" fill="#3a3a3a"/><circle cx="3" cy="9.2" r="1.35" fill="#3a3a3a"/></svg>
<div class="r" style="left:242px;top:715.8px;width:16px;height:16px;background:transparent;border:2px solid #6a6a6a;border-radius:2px;box-sizing:border-box;"></div>
<div class="t" style="left:271.50px;top:718.29px;font-size:11px;line-height:11px;color:#4f4f4f;transform:scaleX(0.9315);">MO_2023-05-04_13:20:27</div>
<div class="r" style="left:423.2px;top:713.6px;width:48.7px;height:21px;background:#8e65ad;border-radius:3px;"></div>
<div class="t" style="left:426.30px;top:718.29px;font-size:11px;line-height:11px;color:#fff;transform:scaleX(0.9392);-webkit-text-stroke:0.3px #fff;">Assigned</div>
<div class="r" style="left:568px;top:713.6px;width:40.1px;height:21px;background:#02679c;border-radius:3px;"></div>
<div class="t" style="left:577.40px;top:718.29px;font-size:11px;line-height:11px;color:#fff;transform:scaleX(0.9415);-webkit-text-stroke:0.3px #fff;">High</div>
<div class="t" style="left:706.00px;top:718.29px;font-size:11px;line-height:11px;color:#4f4f4f;transform:scaleX(0.9884);">test tv</div>
<div class="t" style="left:996.00px;top:718.29px;font-size:11px;line-height:11px;color:#4f4f4f;transform:scaleX(0.9790);">5/4/2023, 05:20 PM</div>
<div class="t" style="left:1141.00px;top:718.29px;font-size:11px;line-height:11px;color:#4f4f4f;transform:scaleX(0.8929);">TV Equip</div>
<div class="t" style="left:1286.00px;top:718.29px;font-size:11px;line-height:11px;color:#4f4f4f;transform:scaleX(0.9449);">Breakdown</div>
<div class="t" style="left:1431.00px;top:718.29px;font-size:11px;line-height:11px;color:#4f4f4f;transform:scaleX(0.9276);">obrabec sikula</div>
<svg class="s" style="left:217px;top:758px;" width="6" height="12" viewBox="0 0 6 12"><circle cx="3" cy="2.6" r="1.35" fill="#3a3a3a"/><circle cx="3" cy="5.9" r="1.35" fill="#3a3a3a"/><circle cx="3" cy="9.2" r="1.35" fill="#3a3a3a"/></svg>
<div class="r" style="left:242px;top:756.2px;width:16px;height:16px;background:transparent;border:2px solid #6a6a6a;border-radius:2px;box-sizing:border-box;"></div>
<div class="t" style="left:271.50px;top:758.69px;font-size:11px;line-height:11px;color:#4f4f4f;transform:scaleX(0.9198);">MO_2023-05-04_13:15:08</div>
<div class="r" style="left:423.2px;top:754.0px;width:48.7px;height:21px;background:#8e65ad;border-radius:3px;"></div>
<div class="t" style="left:426.30px;top:758.69px;font-size:11px;line-height:11px;color:#fff;transform:scaleX(0.9392);-webkit-text-stroke:0.3px #fff;">Assigned</div>
<div class="r" style="left:568px;top:754.0px;width:40.1px;height:21px;background:#02679c;border-radius:3px;"></div>
<div class="t" style="left:578.80px;top:758.69px;font-size:11px;line-height:11px;color:#fff;transform:scaleX(0.9168);-webkit-text-stroke:0.3px #fff;">Low</div>
<div class="t" style="left:706.00px;top:758.69px;font-size:11px;line-height:11px;color:#4f4f4f;transform:scaleX(0.9447);">test plkanovani TV</div>
<div class="t" style="left:851.00px;top:758.69px;font-size:11px;line-height:11px;color:#4f4f4f;transform:scaleX(0.9582);">5/4/2023, 04:14 PM</div>
<div class="t" style="left:996.00px;top:758.69px;font-size:11px;line-height:11px;color:#4f4f4f;transform:scaleX(0.9540);">5/4/2023, 05:15 PM</div>
<div class="t" style="left:1141.00px;top:758.69px;font-size:11px;line-height:11px;color:#4f4f4f;transform:scaleX(0.8929);">TV Equip</div>
<div class="t" style="left:1286.00px;top:758.69px;font-size:11px;line-height:11px;color:#4f4f4f;transform:scaleX(0.9117);">Corrective</div>
<div class="t" style="left:1431.00px;top:758.69px;font-size:11px;line-height:11px;color:#4f4f4f;transform:scaleX(0.9276);">obrabec sikula</div>
<div class="r" style="left:1587px;top:148px;width:263px;height:95.5px;background:#efefef;"></div>
<div class="r" style="left:1587px;top:243.5px;width:263px;height:40px;background:#00649a;"></div>
<div class="r" style="left:1587px;top:283.5px;width:263px;height:40px;background:#00aaff;"></div>
<svg class="s" style="left:1680px;top:148px;" width="80" height="92" viewBox="0 0 80 92"><circle cx="38.4" cy="27.8" r="20.3" fill="#afafaf"/><path d="M3 84 C3 66 16 55.3 30 55.3 H47 C61 55.3 74 66 74 84 Q74 87.7 70.5 87.7 H6.5 Q3 87.7 3 84 Z" fill="#afafaf"/></svg>
<svg class="s" style="left:1808px;top:151px;" width="40" height="40" viewBox="0 0 40 40"><circle cx="19.4" cy="19.4" r="16.4" fill="none" stroke="#262626" stroke-width="2"/><circle cx="19.6" cy="14.4" r="1.35" fill="#262626"/><rect x="18.5" y="18.2" width="2.5" height="9.4" fill="#262626"/><rect x="16.8" y="18.2" width="4" height="1.5" fill="#262626"/><rect x="16.6" y="26.2" width="6.6" height="1.6" fill="#262626"/></svg>
<div class="t" style="left:1595.30px;top:256.20px;font-size:15px;line-height:15px;color:#ffffff;transform:scaleX(1.1025);">Admin P4</div>
<div class="t" style="left:1595.30px;top:296.10px;font-size:15px;line-height:15px;color:#ffffff;transform:scaleX(1.1401);">123456789</div>
<div class="r" style="left:1587px;top:334px;width:263px;height:95.5px;background:#efefef;"></div>
<div class="r" style="left:1587px;top:429.5px;width:263px;height:40px;background:#00649a;"></div>
<div class="r" style="left:1587px;top:469.5px;width:263px;height:40px;background:#00aaff;"></div>
<svg class="s" style="left:1680px;top:334px;" width="80" height="92" viewBox="0 0 80 92"><circle cx="38.4" cy="27.8" r="20.3" fill="#afafaf"/><path d="M3 84 C3 66 16 55.3 30 55.3 H47 C61 55.3 74 66 74 84 Q74 87.7 70.5 87.7 H6.5 Q3 87.7 3 84 Z" fill="#afafaf"/></svg>
<svg class="s" style="left:1808px;top:337px;" width="40" height="40" viewBox="0 0 40 40"><circle cx="19.4" cy="19.4" r="16.4" fill="none" stroke="#262626" stroke-width="2"/><circle cx="19.6" cy="14.4" r="1.35" fill="#262626"/><rect x="18.5" y="18.2" width="2.5" height="9.4" fill="#262626"/><rect x="16.8" y="18.2" width="4" height="1.5" fill="#262626"/><rect x="16.6" y="26.2" width="6.6" height="1.6" fill="#262626"/></svg>
<div class="t" style="left:1595.30px;top:442.20px;font-size:15px;line-height:15px;color:#ffffff;transform:scaleX(1.0855);">obrabec sikula</div>
<div class="t" style="left:1595.30px;top:482.10px;font-size:15px;line-height:15px;color:#ffffff;transform:scaleX(1.0791);">obrabec@productoo.com</div>
<div class="r" style="left:1587px;top:520px;width:263px;height:95.5px;background:#efefef;"></div>
<div class="r" style="left:1587px;top:615.5px;width:263px;height:40px;background:#00649a;"></div>
<div class="r" style="left:1587px;top:655.5px;width:263px;height:40px;background:#00aaff;"></div>
<svg class="s" style="left:1680px;top:520px;" width="80" height="92" viewBox="0 0 80 92"><circle cx="38.4" cy="27.8" r="20.3" fill="#afafaf"/><path d="M3 84 C3 66 16 55.3 30 55.3 H47 C61 55.3 74 66 74 84 Q74 87.7 70.5 87.7 H6.5 Q3 87.7 3 84 Z" fill="#afafaf"/></svg>
<svg class="s" style="left:1808px;top:523px;" width="40" height="40" viewBox="0 0 40 40"><circle cx="19.4" cy="19.4" r="16.4" fill="none" stroke="#262626" stroke-width="2"/><circle cx="19.6" cy="14.4" r="1.35" fill="#262626"/><rect x="18.5" y="18.2" width="2.5" height="9.4" fill="#262626"/><rect x="16.8" y="18.2" width="4" height="1.5" fill="#262626"/><rect x="16.6" y="26.2" width="6.6" height="1.6" fill="#262626"/></svg>
<div class="t" style="left:1595.30px;top:628.20px;font-size:15px;line-height:15px;color:#ffffff;transform:scaleX(1.0922);">Electrician Man</div>
<div class="t" style="left:1595.30px;top:668.10px;font-size:15px;line-height:15px;color:#ffffff;transform:scaleX(1.1387);">123654789</div>
<div class="r" style="left:1587px;top:706px;width:263px;height:95.5px;background:#efefef;"></div>
<div class="r" style="left:1587px;top:801.5px;width:263px;height:40px;background:#00649a;"></div>
<div class="r" style="left:1587px;top:841.5px;width:263px;height:40px;background:#00aaff;"></div>
<svg class="s" style="left:1680px;top:706px;" width="80" height="92" viewBox="0 0 80 92"><circle cx="38.4" cy="27.8" r="20.3" fill="#afafaf"/><path d="M3 84 C3 66 16 55.3 30 55.3 H47 C61 55.3 74 66 74 84 Q74 87.7 70.5 87.7 H6.5 Q3 87.7 3 84 Z" fill="#afafaf"/></svg>
<svg class="s" style="left:1808px;top:709px;" width="40" height="40" viewBox="0 0 40 40"><circle cx="19.4" cy="19.4" r="16.4" fill="none" stroke="#262626" stroke-width="2"/><circle cx="19.6" cy="14.4" r="1.35" fill="#262626"/><rect x="18.5" y="18.2" width="2.5" height="9.4" fill="#262626"/><rect x="16.8" y="18.2" width="4" height="1.5" fill="#262626"/><rect x="16.6" y="26.2" width="6.6" height="1.6" fill="#262626"/></svg>
</body></html>
